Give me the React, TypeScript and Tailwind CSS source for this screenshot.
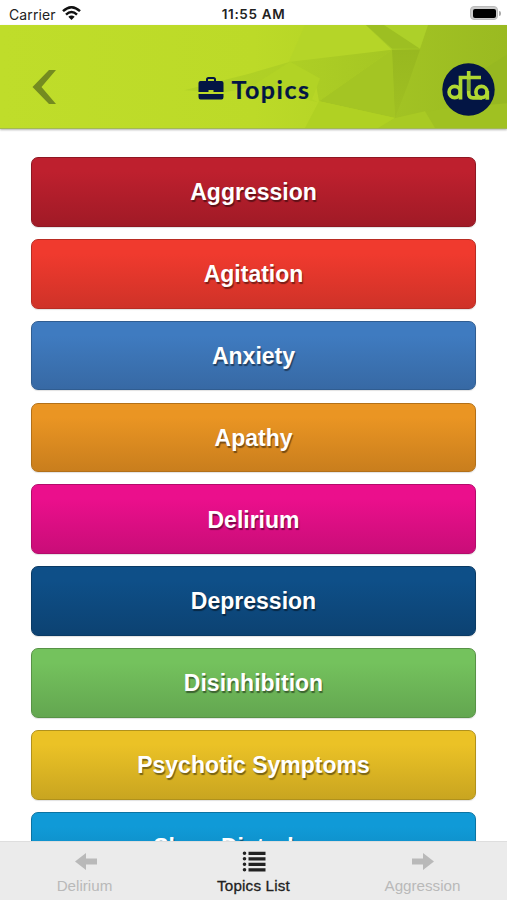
import React, { FC } from "react";

type Topic = {
  name: string;
  className: string;
};

const topics: Topic[] = [
  { name: "Aggression", className: "from-[#be202e] to-[#a01a26] border-[#8e1722]" },
  { name: "Agitation", className: "from-[#f03a2e] to-[#cf3228] border-[#b92c23]" },
  { name: "Anxiety", className: "from-[#3f7bc0] to-[#3769a4] border-[#305d91]" },
  { name: "Apathy", className: "from-[#ea9523] to-[#c97e1d] border-[#b27019]" },
  { name: "Delirium", className: "from-[#eb0f8c] to-[#c90d78] border-[#b30b6b]" },
  { name: "Depression", className: "from-[#0e4f88] to-[#0c4272] border-[#0a3a64]" },
  { name: "Disinhibition", className: "from-[#74c25d] to-[#63a650] border-[#579246]" },
  { name: "Psychotic Symptoms", className: "from-[#ebc226] to-[#c9a520] border-[#b0911c]" },
  { name: "Sleep Disturbance", className: "from-[#109ad7] to-[#0d82b6] border-[#0b73a1]" },
];

const StatusBar: FC = () => (
  <div className="grid h-[25px] shrink-0 grid-cols-3 items-center bg-white pt-[3px] font-['Inter',sans-serif] text-[14px] text-[#222]">
    <div className="flex items-center gap-[6px] pl-[9px]">
      <span className="tracking-[0.1px]">Carrier</span>
      <svg className="mb-[2px]" width="19" height="15" viewBox="0 0 19 15" fill="none" stroke="#111" strokeWidth="2.5">
        <path d="M1 5.2Q9.5-2.6 18 5.2" />
        <path d="M4 8.6Q9.5 3.5 15 8.6" />
        <path d="M9.5 14L6.3 10.8Q9.5 8.2 12.7 10.8Z" fill="#111" stroke="none" />
      </svg>
    </div>
    <div className="text-center text-[13.5px] font-semibold tracking-[0.65px]">11:55 AM</div>
    <div className="flex items-center justify-end pr-[6px] pb-[2px]">
      <div className="h-[14px] w-[28px] rounded-[4px] border border-[#bbb] bg-[#ccc] p-[1.5px]">
        <div className="h-full rounded-[2px] bg-black" />
      </div>
      <div className="ml-px h-[5px] w-[2px] rounded-r-full bg-[#aaa]" />
    </div>
  </div>
);

const HeaderBackground: FC = () => (
  <svg className="absolute inset-0 h-full w-full" viewBox="0 25 507 104" preserveAspectRatio="none">
    <defs>
      <linearGradient id="base" x1="0" x2="1">
        <stop offset="0" stopColor="#bfdd2a" />
        <stop offset="0.5" stopColor="#bcda28" />
        <stop offset="1" stopColor="#a8ca23" />
      </linearGradient>
      <linearGradient id="ray" gradientUnits="userSpaceOnUse" x1="184" y1="0" x2="392" y2="0">
        <stop offset="0" stopColor="#b3d326" />
        <stop offset="0.5" stopColor="#aecf25" />
        <stop offset="1" stopColor="#a5c623" />
      </linearGradient>
      <linearGradient id="side" x1="0" x2="1">
        <stop offset="0" stopColor="#a4c524" />
        <stop offset="1" stopColor="#9aba21" />
      </linearGradient>
      <linearGradient id="fold" x1="0" y1="0" x2="0" y2="1">
        <stop offset="0" stopColor="#98b820" />
        <stop offset="1" stopColor="#a0c022" />
      </linearGradient>
    </defs>
    <path d="M0 25H507V129H0Z" fill="url(#base)" />
    <path d="M305 25H366L392 50L288 64Z" fill="#b5d528" />
    <path d="M184 91L250 74L290 62L392 50L319 102L315 80L250 88L225 93Z" fill="url(#ray)" />
    <path d="M290 62L320 79L312 100L318 103L250 88Z" fill="#b2d325" />
    <path d="M319 102L392 50L395 119Z" fill="#a4c523" />
    <path d="M366 25H507V129H420L395 119L392 50Z" fill="url(#side)" />
    <path d="M366 25H428L420 49L392 50Z" fill="#add029" />
    <path d="M366 25H384L420 49H392Z" fill="#9dbf22" />
    <path d="M392 50H420L408 85L395 119Z" fill="url(#fold)" />
    <path d="M507 55V104L470 107L480 72Z" fill="#97b821" />
    <path d="M395 119L440 110L507 104V129H380Z" fill="#a0c122" />
    <path d="M319 102L395 119L378 129H305Z" fill="#b0d123" />
    <path d="M395 119L425 112L435 129H378Z" fill="#a9ca24" />
  </svg>
);

const Logo: FC = () => (
  <svg className="absolute top-[38px] right-[12px]" width="53" height="53" viewBox="0 0 53 53">
    <circle cx="26.5" cy="26.5" r="26.2" fill="#031544" />
    <g fill="none" stroke="#b0d832" strokeWidth="3.7">
      <circle cx="12.7" cy="29" r="5.6" />
      <path d="M18.500 36.500V14.500H39" />
      <path d="M26.700 8V30Q26.700 34.900 31 34.900H40" />
      <circle cx="39.500" cy="29" r="5.600" />
      <path d="M45.300 28V36.700" />
    </g>
    <path d="M26.700 16.500V28" stroke="#69972c" strokeWidth="3.7" opacity="0.6" />
  </svg>
);

const Header: FC = () => (
  <header className="relative z-10 flex h-[104px] shrink-0 items-center justify-center border-b border-[#a3b955] pt-[24px] shadow-[0_1px_2px_rgba(0,0,0,0.3)]">
    <HeaderBackground />
    <svg className="absolute top-[44px] left-[32px]" width="25" height="36" viewBox="0 0 25 36">
      <path d="M17 1H24L9.500 18L24 35H17L0.500 18Z" fill="#748b20" />
    </svg>
    <div className="relative flex items-center gap-[8px] text-[#031544]">
      <svg className="mb-[2px]" width="26" height="24" viewBox="0 0 26 24">
        <path d="M9 6V3.500Q9 2 10.500 2H15.500Q17 2 17 3.500V6" fill="none" stroke="currentColor" strokeWidth="2" />
        <path
          d="M2.500 5H23.500Q25.500 5 25.500 7V16H15.500V14H10.500V16H0.500V7Q0.500 5 2.500 5ZM0.500 18H25.500V21Q25.500 23.500 23.500 23.500H2.500Q0.500 23.500 0.500 21Z"
          fill="currentColor"
        />
      </svg>
      <h1 className="-mr-px font-['Lato',sans-serif] text-[25px] leading-[30px] font-bold tracking-[1.5px] [-webkit-text-stroke:0.2px_#031544]">
        Topics
      </h1>
    </div>
    <Logo />
  </header>
);

const TopicButton: FC<Topic> = ({ name, className }) => (
  <button
    className={`h-[69.8px] w-full shrink-0 rounded-[7px] border bg-linear-to-b from-20% pt-px text-[23px] font-bold text-white shadow-[0_1px_1px_rgba(0,0,0,0.12)] [text-shadow:1px_2px_1px_rgba(0,0,0,0.45)] ${className}`}
  >
    {name}
  </button>
);

const TabBar: FC = () => (
  <nav className="z-10 grid h-[59px] shrink-0 grid-cols-3 border-t border-[#dedede] bg-[#ebebeb] text-[15.2px] leading-[18px] text-[#b9b9b9]">
    <div className="flex flex-col items-center gap-[4px] pt-[9px]">
      <svg className="ml-[2px]" width="22" height="22" viewBox="0 0 22 22" fill="currentColor">
        <path d="M0 10.500L11 2V7.500H22V13.500H11V19Z" />
      </svg>
      <span>Delirium</span>
    </div>
    <div className="flex flex-col items-center gap-[4px] pt-[9px] text-[#222]">
      <svg width="24" height="22" viewBox="0 0 24 22" fill="none" stroke="currentColor" strokeWidth="3.6">
        <path d="M2.500 2.300H2.510M2.500 7.800H2.510M2.500 13.300H2.510M2.500 18.800H2.510" strokeLinecap="round" />
        <path d="M6.500 2.300H23.500M6.500 7.800H23.500M6.500 13.300H23.500M6.500 18.800H23.500" strokeWidth="3.2" />
      </svg>
      <span className="tracking-[0.2px] [-webkit-text-stroke:0.3px_#222]">Topics List</span>
    </div>
    <div className="flex flex-col items-center gap-[4px] pt-[9px]">
      <svg width="22" height="22" viewBox="0 0 22 22" fill="currentColor">
        <path d="M22 10.500L11 2V7.500H0V13.500H11V19Z" />
      </svg>
      <span>Aggression</span>
    </div>
  </nav>
);

const App: FC = () => {
  return (
    <div className="flex h-screen w-full flex-col overflow-hidden bg-white font-['Liberation_Sans',Arial,sans-serif]">
      <StatusBar />
      <Header />
      <main className="flex min-h-0 flex-1 flex-col gap-[12.05px] overflow-hidden px-[31px] pt-[28px]">
        {topics.map((topic) => (
          <TopicButton key={topic.name} {...topic} />
        ))}
      </main>
      <TabBar />
    </div>
  );
};

export default App;
